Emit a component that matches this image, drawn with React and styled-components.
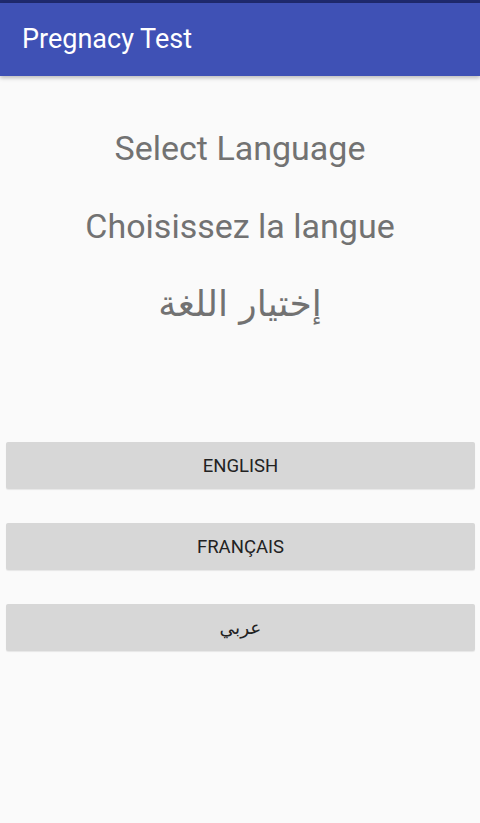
import React from 'react'
import styled, { createGlobalStyle } from 'styled-components'

const GlobalStyle = createGlobalStyle`
  html, body {
    margin: 0;
    padding: 0;
    background: #fafafa;
  }
  body {
    font-family: Roboto, "Noto Sans", "DejaVu Sans", sans-serif;
  }
`

const Screen = styled.div`
  width: 480px;
  min-height: 823px;
  background: #fafafa;
  display: flex;
  flex-direction: column;
`

const StatusStrip = styled.div`
  height: 3px;
  background: #1f2a6e;
`

const AppBar = styled.header`
  height: 73px;
  background: #3f51b5;
  display: flex;
  align-items: center;
  padding: 0 0 0 22px;
  box-sizing: border-box;
  box-shadow: 0 2px 4px rgba(0, 0, 0, 0.25);
  position: relative;
  z-index: 1;
`

const Title = styled.h1`
  margin: 0 0 2px;
  color: #ffffff;
  font-size: 27px;
  font-weight: 400;
`

const Headings = styled.section`
  display: flex;
  flex-direction: column;
  align-items: center;
  padding-top: 52px;
  gap: 38px;
`

const Heading = styled.h2`
  margin: 0;
  color: #727272;
  font-size: ${p => p.$arabic ? '36px' : '34px'};
  font-weight: 400;
  line-height: 40px;
  font-family: ${p => p.$arabic ? '"DejaVu Sans", "Noto Sans", sans-serif' : 'Roboto, sans-serif'};
`

const ButtonList = styled.div`
  display: flex;
  flex-direction: column;
  gap: 34px;
  padding: 118px 5px 0 6px;
`

const LangButton = styled.button`
  height: 47px;
  border: none;
  border-radius: 2px;
  background: #d7d7d7;
  color: #222222;
  font-size: 18.5px;
  font-family: ${p => p.$arabic ? '"DejaVu Sans", "Noto Sans", sans-serif' : 'Roboto, sans-serif'};
  text-transform: uppercase;
  box-shadow: 0 1px 1px rgba(0, 0, 0, 0.08);
`

const languages = [
  { id: 'en', label: 'English' },
  { id: 'fr', label: 'Français' },
  { id: 'ar', label: 'عربي', arabic: true },
]

export default function App() {
  return (
    <>
      <GlobalStyle />
      <Screen>
        <StatusStrip />
        <AppBar>
          <Title>Pregnacy Test</Title>
        </AppBar>
        <Headings>
          <Heading>Select Language</Heading>
          <Heading>Choisissez la langue</Heading>
          <Heading $arabic dir="rtl">إختيار اللغة</Heading>
        </Headings>
        <ButtonList>
          {languages.map(l => (
            <LangButton key={l.id} $arabic={l.arabic}>{l.label}</LangButton>
          ))}
        </ButtonList>
      </Screen>
    </>
  )
}
